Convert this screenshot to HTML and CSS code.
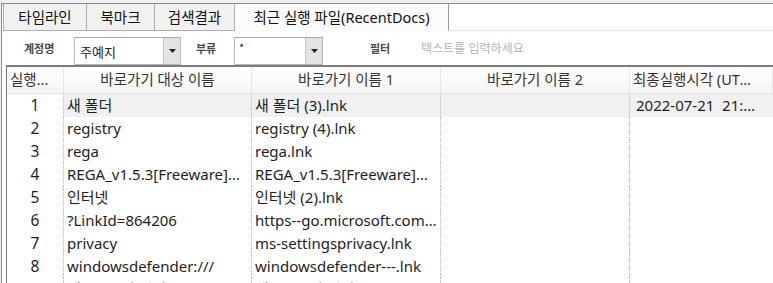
FILE: index.html
```html
<!DOCTYPE html>
<html lang="ko">
<head>
<meta charset="utf-8">
<link rel="stylesheet" href="styles.css">
</head>
<body>
<div class="win">
  <div class="tabs">
    <div class="tab t1">타임라인</div>
    <div class="tab t2">북마크</div>
    <div class="tab t3">검색결과</div>
    <div class="tab active">최근 실행 파일(RecentDocs)</div>
    <div class="tab-fill"></div>
  </div>
  <div class="panel">
    <div class="filters">
      <span class="lbl l1">계정명</span>
      <div class="combo c1"><span class="val">주예지</span><span class="drop"><svg width="7" height="4" viewBox="0 0 7 4"><path d="M0 0h7L3.5 4z" fill="#222"/></svg></span></div>
      <span class="lbl l2">부류</span>
      <div class="combo c2"><span class="val star">*</span><span class="drop"><svg width="7" height="4" viewBox="0 0 7 4"><path d="M0 0h7L3.5 4z" fill="#222"/></svg></span></div>
      <span class="lbl l3">필터</span>
      <span class="ph">텍스트를 입력하세요</span>
    </div>
    <div class="grid">
      <div class="row head">
        <div class="c k0 left">실행...</div>
        <div class="c k1">바로가기 대상 이름</div>
        <div class="c k2">바로가기 이름 1</div>
        <div class="c k3">바로가기 이름 2</div>
        <div class="c k4">최종실행시각 (UTC+09:00)</div>
      </div>
      <div class="row sel">
        <div class="c k0 num">1</div>
        <div class="c k1">새 폴더</div>
        <div class="c k2">새 폴더 (3).lnk</div>
        <div class="c k3"></div>
        <div class="c k4 date">2022-07-21&nbsp;&nbsp;21:43:12</div>
      </div>
      <div class="row">
        <div class="c k0 num">2</div>
        <div class="c k1">registry</div>
        <div class="c k2">registry (4).lnk</div>
        <div class="c k3"></div>
        <div class="c k4"></div>
      </div>
      <div class="row">
        <div class="c k0 num">3</div>
        <div class="c k1">rega</div>
        <div class="c k2">rega.lnk</div>
        <div class="c k3"></div>
        <div class="c k4"></div>
      </div>
      <div class="row">
        <div class="c k0 num">4</div>
        <div class="c k1">REGA_v1.5.3[Freeware]Win.zip</div>
        <div class="c k2">REGA_v1.5.3[Freeware]Win.lnk</div>
        <div class="c k3"></div>
        <div class="c k4"></div>
      </div>
      <div class="row">
        <div class="c k0 num">5</div>
        <div class="c k1">인터넷</div>
        <div class="c k2">인터넷 (2).lnk</div>
        <div class="c k3"></div>
        <div class="c k4"></div>
      </div>
      <div class="row">
        <div class="c k0 num">6</div>
        <div class="c k1">?LinkId=864206</div>
        <div class="c k2">https--go.microsoft.com-fwlink.lnk</div>
        <div class="c k3"></div>
        <div class="c k4"></div>
      </div>
      <div class="row">
        <div class="c k0 num">7</div>
        <div class="c k1">privacy</div>
        <div class="c k2">ms-settingsprivacy.lnk</div>
        <div class="c k3"></div>
        <div class="c k4"></div>
      </div>
      <div class="row">
        <div class="c k0 num">8</div>
        <div class="c k1">windowsdefender:///</div>
        <div class="c k2">windowsdefender---.lnk</div>
        <div class="c k3"></div>
        <div class="c k4"></div>
      </div>
      <div class="row">
        <div class="c k0 num">9</div>
        <div class="c k1">내 PC 폴더 열기</div>
        <div class="c k2">내 PC 폴더 열기.lnk</div>
        <div class="c k3"></div>
        <div class="c k4"></div>
      </div>
    </div>
  </div>
</div>
</body>
</html>
```

FILE: styles.css
```css
* { box-sizing: border-box; }
html, body { margin: 0; padding: 0; }
body {
  width: 773px;
  height: 283px;
  overflow: hidden;
  background: #f0f0f0;
  font-family: "Noto Sans", "Noto Sans CJK KR", sans-serif;
  color: #1e1e1e;
}
.win {
  margin-top: 3px;
  margin-left: 1px;
  height: 280px;
  border-top: 1px solid #8e8e8e;
  border-left: 1px solid #8e8e8e;
  background: #fff;
}
.tabs {
  display: flex;
  height: 27px;
  background: #fff;
}
.tab {
  font-family: "Noto Sans", "Noto Sans CJK KR", sans-serif;
  font-size: 14.5px;
  line-height: 26px;
  height: 27px;
  text-align: center;
  background: #f1f1f1;
  border-right: 1px solid #adadad;
  border-bottom: 1px solid #adadad;
  color: #111;
}
.tab.t1 { width: 84px; border-left: 1px solid #adadad; margin-left: 1px; }
.tab.t2 { width: 68px; }
.tab.t3 { width: 80px; }
.tab.active {
  width: 214px;
  background: #fbfbfb;
  border-bottom: 1px solid #fbfbfb;
  border-right: 1px solid #9a9a9a;
}
.tab-fill {
  flex: 1;
  border-bottom: 1px solid #e3e3e3;
}
.panel {
  background: #fff;
}
.filters {
  position: relative;
  height: 34px;
}
.lbl {
  position: absolute;
  top: 9px;
  font-family: "Noto Sans CJK KR", sans-serif;
  font-size: 11px;
  font-weight: bold;
  color: #4a4a4a;
}
.l1 { left: 22px; }
.l2 { left: 194px; }
.l3 { left: 368px; }
.ph {
  position: absolute;
  left: 419px;
  top: 8px;
  font-family: "Noto Sans CJK KR", sans-serif;
  font-size: 12px;
  color: #b4b4b4;
}
.combo {
  position: absolute;
  top: 6px;
  height: 28px;
  border: 1px solid #b7b7b7;
  border-top-color: #a8a8a8;
  background: #fff;
  display: flex;
}
.c1 { left: 72px; width: 107px; }
.c2 { left: 232px; width: 89px; }
.combo .val {
  flex: 1;
  font-family: "Noto Sans CJK KR", sans-serif;
  font-size: 13px;
  padding-left: 5px;
  padding-top: 4px;
  color: #222;
}
.combo .val.star { font-size: 11px; padding-top: 1px; padding-left: 4px; }
.drop {
  width: 17px;
  background: #e3e3e3;
  border-left: 1px solid #c8c8c8;
  display: flex;
  align-items: center;
  justify-content: center;
}
.grid {
  margin-left: 4px;
  border-left: 1px solid #7a7a7a;
  border-top: 2px solid #7d7d7d;
  height: 230px;
  overflow: hidden;
}
.row {
  display: flex;
  height: 23px;
  font-size: 15px;
  line-height: 23px;
}
.row.head {
  height: 27px;
  line-height: 25px;
  background: linear-gradient(#ffffff, #f4f4f4);
  border-bottom: 1px solid #e4e4e4;
  font-family: "Noto Sans", "Noto Sans CJK KR", sans-serif;
  font-size: 14.5px;
  color: #333;
}
.c {
  white-space: nowrap;
  overflow: hidden;
  text-overflow: ellipsis;
  padding: 0 3px;
  border-right: 1px dotted #b9b9b9;
  flex: none;
}
.head .c { text-align: center; border-right: 1px solid #e6e6e6; }
.head .c.left { text-align: left; padding-left: 3px; }
.k0 { width: 57px; }
.k1 { width: 188px; }
.k2 { width: 189px; }
.k3 { width: 189px; }
.k4 { flex: 1; border-right: none; padding-right: 4px; }
.c.k4 { padding-right: 4px; }
.head .c.k4 { padding-right: 12px; }
.row .c.date { padding-left: 6px; padding-right: 13px; }
.c.num { text-align: center; font-size: 15.5px; }
.row.sel .c:not(.k0) { background: #f0f0f0; }
```
